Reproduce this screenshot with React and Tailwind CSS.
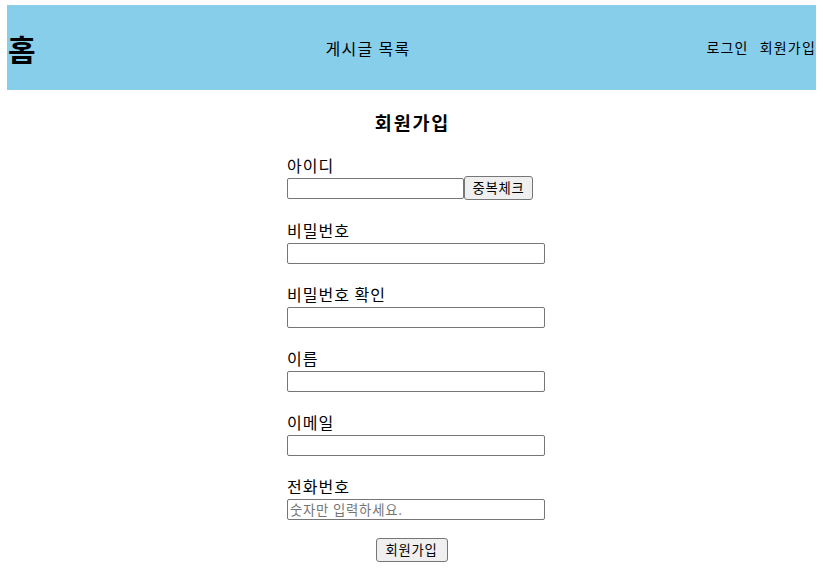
const font = { fontFamily: '"Noto Sans CJK KR", "Noto Sans", sans-serif' };

function Field({ label, children }) {
  return (
    <div className="mb-[18px]">
      <div className="h-[25px] text-[16px] leading-[25px] tracking-[1px] text-black">{label}</div>
      {children}
    </div>
  );
}

const inputCls =
  "block h-[21px] w-[258px] rounded-[2px] border border-[#767676] bg-white px-[2px] text-[13.33px] leading-[19px] tracking-[0.8px] outline-none placeholder:text-[#757575]";

const btnCls =
  "h-[24px] rounded-[3px] border border-[#767676] bg-[#efefef] text-[13.33px] leading-[20px] tracking-[0.8px] text-black";

export default function App() {
  return (
    <div className="min-h-[580px] bg-white" style={font}>
      <header className="mx-[7px] mt-[5px] flex h-[85px] items-center justify-between bg-[#87ceeb] pl-[1px]">
        <div className="text-[30px] font-bold leading-none text-black">홈</div>
        <nav className="pr-[6px] text-[16px] tracking-[1.3px] text-black">게시글 목록</nav>
        <div className="flex gap-[11px] text-[14px] tracking-[1.2px] text-black">
          <span>로그인</span>
          <span>회원가입</span>
        </div>
      </header>

      <h3 className="mt-[20px] h-[25px] pl-[2px] text-center text-[18.5px] font-bold leading-[25px] tracking-[1.8px] text-black">
        회원가입
      </h3>

      <div className="mx-auto mt-[18px] w-[249px] pl-0">
        <Field label="아이디">
          <div className="-mt-[2px] flex h-[24px] items-center">
            <input className={inputCls + " !w-[177px]"} />
            <button className={btnCls + " w-[69px]"}>중복체크</button>
          </div>
        </Field>
        <Field label="비밀번호">
          <input type="password" className={inputCls} />
        </Field>
        <Field label="비밀번호 확인">
          <input type="password" className={inputCls} />
        </Field>
        <Field label="이름">
          <input className={inputCls} />
        </Field>
        <Field label="이메일">
          <input className={inputCls} />
        </Field>
        <Field label="전화번호">
          <input className={inputCls} placeholder="숫자만 입력하세요." />
        </Field>
      </div>

      <div className="mt-[2px] flex justify-center">
        <button className={btnCls + " w-[72px]"}>회원가입</button>
      </div>
    </div>
  );
}
